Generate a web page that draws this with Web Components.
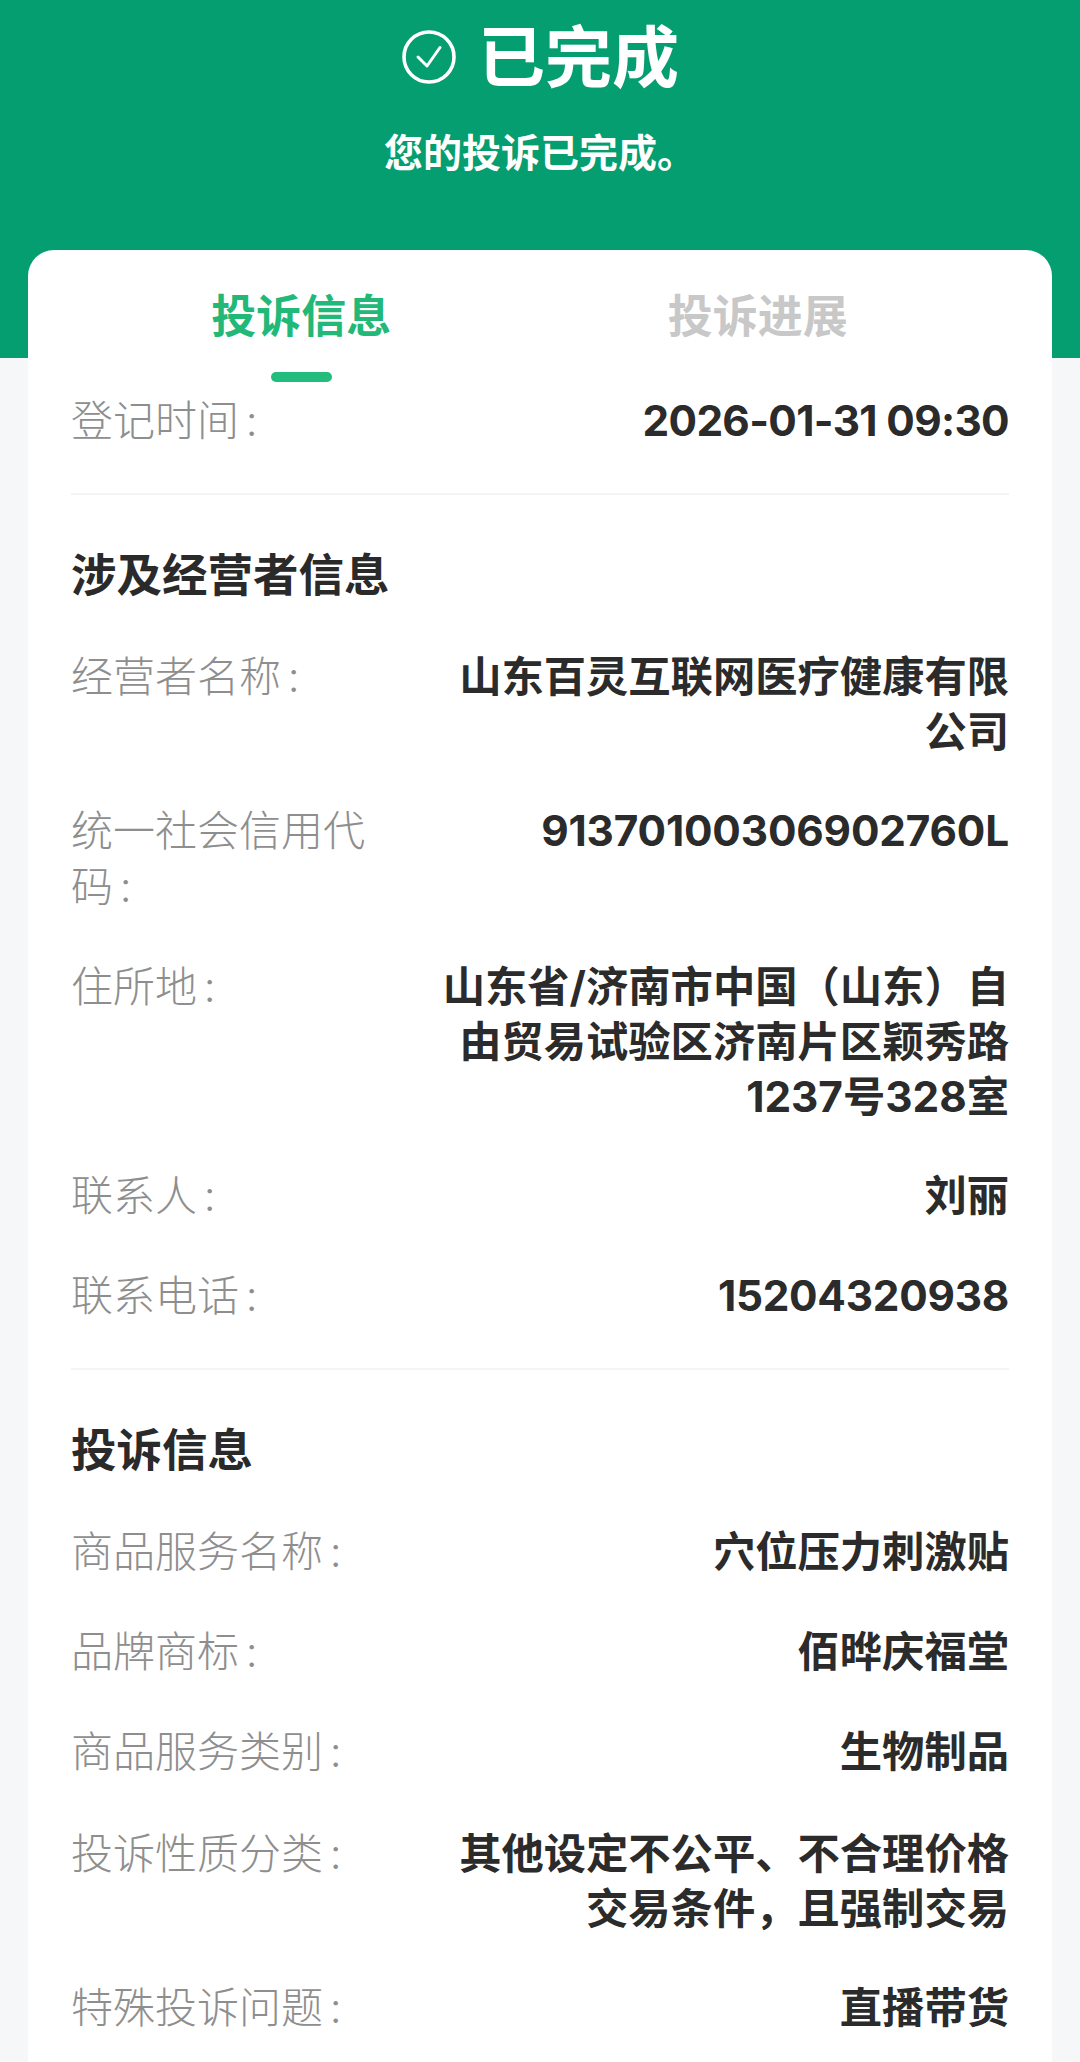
<!DOCTYPE html>
<html lang="zh-CN"><head><meta charset="utf-8"><title>投诉信息</title>
<style>
html,body{margin:0;padding:0;background:#f5f7f8}
body{height:2062px;overflow:hidden;font-family:Inter,"Noto Sans CJK SC",sans-serif;color:#2b2b2b}
</style></head><body>
<complaint-page>
  <status-banner slot="banner" title-text="已完成" sub="您的投诉已完成。"></status-banner>
  <info-card>
    <tab-bar></tab-bar>
    <info-row label="登记时间" style="letter-spacing:-.65px">2026-01-31 09:30</info-row>
    <info-divider></info-divider>
    <section-title>涉及经营者信息</section-title>
    <info-row label="经营者名称">山东百灵互联网医疗健康有限公司</info-row>
    <info-row label="统一社会信用代码" style="letter-spacing:-.15px">91370100306902760L</info-row>
    <info-row label="住所地">山东省/济南市中国（山东）自由贸易试验区济南片区颖秀路1237号328室</info-row>
    <info-row label="联系人">刘丽</info-row>
    <info-row label="联系电话" style="letter-spacing:-.25px">15204320938</info-row>
    <info-divider></info-divider>
    <section-title>投诉信息</section-title>
    <info-row label="商品服务名称">穴位压力刺激贴</info-row>
    <info-row label="品牌商标">佰晔庆福堂</info-row>
    <info-row label="商品服务类别" style="margin-bottom:46px">生物制品</info-row>
    <info-row label="投诉性质分类">其他设定不公平、不合理价格交易条件，且强制交易</info-row>
    <info-row label="特殊投诉问题">直播带货</info-row>
  </info-card>
</complaint-page>
<script>
function def(name, html, init){
  customElements.define(name, class extends HTMLElement{
    connectedCallback(){
      if(this.shadowRoot) return;
      const r=this.attachShadow({mode:'open'});
      r.innerHTML=html;
      if(init) init(this,r);
    }
  });
}
def('complaint-page',`<style>:host{display:block}</style><slot name="banner"></slot><slot></slot>`);
def('status-banner',`<style>
:host{display:block;height:358px;background:#049e70;color:#fff;box-sizing:border-box;padding-top:16px;text-align:center;font-family:"Noto Sans CJK SC",sans-serif}
.t{display:flex;justify-content:center;align-items:center;gap:21px;height:74px}
svg{width:56px;height:56px;display:block;margin-top:8px}
h1{margin:0;font-size:67px;font-weight:700;line-height:74px}
p{margin:32px 0 0;font-size:39px;font-weight:700;line-height:56px;letter-spacing:0}
</style>
<div class="t"><svg viewBox="0 0 56 56" fill="none" stroke="#fff"><circle cx="28" cy="28" r="25" stroke-width="3.600"/><path d="M17 28l9 9 13-18.500" stroke-width="3" stroke-linecap="round" stroke-linejoin="round"/></svg><h1></h1></div><p></p>`,
(h,r)=>{r.querySelector('h1').textContent=h.getAttribute('title-text');r.querySelector('p').textContent=h.getAttribute('sub');});
def('info-card',`<style>
:host{display:block;margin:-108px 28px 0;background:#fff;border-radius:26px 26px 0 0;padding:0 43px 0;min-height:1812px;box-sizing:border-box}
</style><slot></slot>`);
def('tab-bar',`<style>
:host{display:grid;grid-template-columns:1fr 1fr;margin:0 23px 11px 2px;height:132px;font-family:"Noto Sans CJK SC",sans-serif}
div{display:flex;flex-direction:column;align-items:center;font-size:45px;font-weight:700;color:#c8c8c8;padding-top:31px;line-height:66px;box-sizing:border-box}
.on{color:#22b978}
.on::after{content:"";width:61px;height:10px;border-radius:5px;background:#22bd7c;margin-top:25px}
</style><div class="on">投诉信息</div><div>投诉进展</div>`);
def('info-row',`<style>
:host{display:flex;justify-content:space-between;align-items:flex-start;line-height:56px;margin-bottom:44px}
.l{width:320px;flex:none;color:#8e8e8e;font-weight:300;font-size:42px;letter-spacing:0;word-spacing:-5px;font-family:Inter,"Noto Sans CJK SC",sans-serif}
.v{width:575px;flex:none;font-size:42.300px;line-height:55px;text-align:right;font-weight:700;color:#2b2b2b;font-family:Inter,"Noto Sans CJK SC",sans-serif}
</style><div class="l"></div><div class="v"><slot></slot></div>`,
(h,r)=>{r.querySelector('.l').textContent=h.getAttribute('label')+' :';});
def('info-divider',`<style>:host{display:block;height:2px;background:#f3f4f4;margin:3px 0 49px}</style>`);
def('section-title',`<style>:host{display:block;font-size:45.500px;font-weight:700;line-height:56px;margin-bottom:49px;color:#2a2a2a;font-family:"Noto Sans CJK SC",sans-serif}</style><slot></slot>`);
</script>
</body></html>
